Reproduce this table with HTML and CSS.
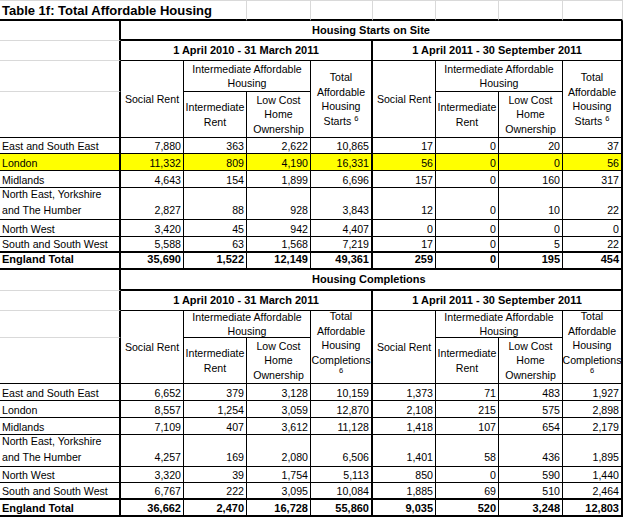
FILE: index.html
```html
<!DOCTYPE html>
<html lang="en">
<head>
<meta charset="utf-8">
<title>Table 1f: Total Affordable Housing</title>
<link rel="stylesheet" href="styles.css">
</head>
<body>
<div class="titlebar">
  <div class="tc title">Table 1f: Total Affordable Housing</div>
  <div class="tc"></div>
  <div class="tc"></div>
  <div class="tc"></div>
  <div class="tc"></div>
  <div class="tc"></div>
  <div class="tc"></div>
</div>

<section class="sheet t1">
  <div class="row band">
    <div class="c lab gl"></div>
    <div class="c fill"></div>
    <div class="c tot band-title">Housing Starts on Site</div>
  </div>
  <div class="row period">
    <div class="c lab gl"></div>
    <div class="c tot span4">1 April 2010 - 31 March 2011</div>
    <div class="c tot span4">1 April 2011 - 30 September 2011</div>
  </div>
  <div class="row">
    <div class="c lab gl"></div>
    <div class="c h r2"><span class="ht">Social Rent</span></div>
    <div class="c h s2"><span class="ht">Intermediate Affordable<br>Housing</span></div>
    <div class="c h r2 tot"><span class="ht">Total<br>Affordable<br>Housing<br>Starts <sup class="fn">6</sup></span></div>
    <div class="c h r2"><span class="ht">Social Rent</span></div>
    <div class="c h s2"><span class="ht">Intermediate Affordable<br>Housing</span></div>
    <div class="c h r2 tot"><span class="ht">Total<br>Affordable<br>Housing<br>Starts <sup class="fn">6</sup></span></div>
  </div>
  <div class="row">
    <div class="c lab"></div>
    <div class="c h"><span class="ht">Intermediate<br>Rent</span></div>
    <div class="c h"><span class="ht">Low Cost<br>Home<br>Ownership</span></div>
    <div class="c h"><span class="ht">Intermediate<br>Rent</span></div>
    <div class="c h"><span class="ht">Low Cost<br>Home<br>Ownership</span></div>
  </div>

  <div class="row d">
    <div class="c">East and South East</div>
    <div class="c">7,880</div><div class="c">363</div><div class="c">2,622</div><div class="c">10,865</div>
    <div class="c">17</div><div class="c">0</div><div class="c">20</div><div class="c">37</div>
  </div>
  <div class="row d hl">
    <div class="c">London</div>
    <div class="c">11,332</div><div class="c">809</div><div class="c">4,190</div><div class="c">16,331</div>
    <div class="c">56</div><div class="c">0</div><div class="c">0</div><div class="c">56</div>
  </div>
  <div class="row d">
    <div class="c">Midlands</div>
    <div class="c">4,643</div><div class="c">154</div><div class="c">1,899</div><div class="c">6,696</div>
    <div class="c">157</div><div class="c">0</div><div class="c">160</div><div class="c">317</div>
  </div>
  <div class="row d tall">
    <div class="c"><span class="ht">North East, Yorkshire<br>and The Humber</span></div>
    <div class="c">2,827</div><div class="c">88</div><div class="c">928</div><div class="c">3,843</div>
    <div class="c">12</div><div class="c">0</div><div class="c">10</div><div class="c">22</div>
  </div>
  <div class="row d">
    <div class="c">North West</div>
    <div class="c">3,420</div><div class="c">45</div><div class="c">942</div><div class="c">4,407</div>
    <div class="c">0</div><div class="c">0</div><div class="c">0</div><div class="c">0</div>
  </div>
  <div class="row d thick">
    <div class="c">South and South West</div>
    <div class="c">5,588</div><div class="c">63</div><div class="c">1,568</div><div class="c">7,219</div>
    <div class="c">17</div><div class="c">0</div><div class="c">5</div><div class="c">22</div>
  </div>
  <div class="row d thick total">
    <div class="c">England Total</div>
    <div class="c">35,690</div><div class="c">1,522</div><div class="c">12,149</div><div class="c">49,361</div>
    <div class="c">259</div><div class="c">0</div><div class="c">195</div><div class="c">454</div>
  </div>
</section>

<section class="sheet t2">
  <div class="row band">
    <div class="c lab gl"></div>
    <div class="c fill"></div>
    <div class="c tot band-title">Housing Completions</div>
  </div>
  <div class="row period">
    <div class="c lab gl"></div>
    <div class="c tot span4">1 April 2010 - 31 March 2011</div>
    <div class="c tot span4">1 April 2011 - 30 September 2011</div>
  </div>
  <div class="row">
    <div class="c lab gl"></div>
    <div class="c h r2"><span class="ht">Social Rent</span></div>
    <div class="c h s2"><span class="ht">Intermediate Affordable<br>Housing</span></div>
    <div class="c h r2 tot top"><span class="ht">Total<br>Affordable<br>Housing<br>Completions<span class="fn-line">6</span></span></div>
    <div class="c h r2"><span class="ht">Social Rent</span></div>
    <div class="c h s2"><span class="ht">Intermediate Affordable<br>Housing</span></div>
    <div class="c h r2 tot top"><span class="ht">Total<br>Affordable<br>Housing<br>Completions<span class="fn-line">6</span></span></div>
  </div>
  <div class="row">
    <div class="c lab"></div>
    <div class="c h"><span class="ht">Intermediate<br>Rent</span></div>
    <div class="c h"><span class="ht">Low Cost<br>Home<br>Ownership</span></div>
    <div class="c h"><span class="ht">Intermediate<br>Rent</span></div>
    <div class="c h"><span class="ht">Low Cost<br>Home<br>Ownership</span></div>
  </div>

  <div class="row d">
    <div class="c">East and South East</div>
    <div class="c">6,652</div><div class="c">379</div><div class="c">3,128</div><div class="c">10,159</div>
    <div class="c">1,373</div><div class="c">71</div><div class="c">483</div><div class="c">1,927</div>
  </div>
  <div class="row d">
    <div class="c">London</div>
    <div class="c">8,557</div><div class="c">1,254</div><div class="c">3,059</div><div class="c">12,870</div>
    <div class="c">2,108</div><div class="c">215</div><div class="c">575</div><div class="c">2,898</div>
  </div>
  <div class="row d">
    <div class="c">Midlands</div>
    <div class="c">7,109</div><div class="c">407</div><div class="c">3,612</div><div class="c">11,128</div>
    <div class="c">1,418</div><div class="c">107</div><div class="c">654</div><div class="c">2,179</div>
  </div>
  <div class="row d tall">
    <div class="c"><span class="ht">North East, Yorkshire<br>and The Humber</span></div>
    <div class="c">4,257</div><div class="c">169</div><div class="c">2,080</div><div class="c">6,506</div>
    <div class="c">1,401</div><div class="c">58</div><div class="c">436</div><div class="c">1,895</div>
  </div>
  <div class="row d">
    <div class="c">North West</div>
    <div class="c">3,320</div><div class="c">39</div><div class="c">1,754</div><div class="c">5,113</div>
    <div class="c">850</div><div class="c">0</div><div class="c">590</div><div class="c">1,440</div>
  </div>
  <div class="row d thick">
    <div class="c">South and South West</div>
    <div class="c">6,767</div><div class="c">222</div><div class="c">3,095</div><div class="c">10,084</div>
    <div class="c">1,885</div><div class="c">69</div><div class="c">510</div><div class="c">2,464</div>
  </div>
  <div class="row d thick total">
    <div class="c">England Total</div>
    <div class="c">36,662</div><div class="c">2,470</div><div class="c">16,728</div><div class="c">55,860</div>
    <div class="c">9,035</div><div class="c">520</div><div class="c">3,248</div><div class="c">12,803</div>
  </div>
</section>
</body>
</html>
```

FILE: styles.css
```css
* {
  box-sizing: border-box;
}

html,
body {
  margin: 0;
  padding: 0;
  background: #ffffff;
}

body {
  width: 626px;
  height: 517px;
  overflow: hidden;
  font-family: "Liberation Sans", Arial, sans-serif;
  font-size: 10.6px;
  color: #000000;
}

.titlebar,
.sheet {
  display: grid;
  grid-template-columns: 121px 63px 63px 64px 62px 63px 63px 64px 60px;
  width: 623px;
}

/* title row with spreadsheet grid lines */
.titlebar {
  height: 21px;
}

.tc {
  border-top: 1px solid #d9d9d9;
  border-right: 1px solid #d9d9d9;
  border-bottom: 2px solid #000000;
}

.title {
  grid-column: span 3;
  display: flex;
  align-items: flex-end;
  padding: 0 0 1px 2px;
  font-size: 13px;
  font-weight: bold;
  line-height: 15px;
  white-space: nowrap;
}

.t1 {
  grid-template-rows: 20px 20px 31px 46px 16px 17px 17px 32px 17px 16px 17px;
}

.t2 {
  grid-template-rows: 21px 20px 27px 46px 17px 17px 17px 32px 16px 17px 17px;
}

.row {
  display: contents;
}

/* base cell */
.c {
  display: flex;
  align-items: flex-end;
  justify-content: flex-end;
  padding: 0 2px 1px;
  border-right: 1px solid #000000;
  border-bottom: 1px solid #000000;
  line-height: 12px;
  white-space: nowrap;
  min-width: 0;
}

.lab,
.d > .c:first-child {
  border-right-width: 2px;
  justify-content: flex-start;
}

.tot,
.d > .c:nth-child(5),
.d > .c:nth-child(9) {
  border-right-width: 2px;
}

.gl {
  border-bottom-color: #d9d9d9;
}

.ht {
  display: block;
}

/* band row: Housing Starts / Completions */
.band > .c {
  align-items: center;
  border-bottom-width: 2px;
  font-size: 11px;
  font-weight: bold;
  line-height: 13px;
  padding-bottom: 0;
}

.band > .lab {
  border-bottom: 1px solid #d9d9d9;
}

.fill {
  grid-column: span 3;
  border-right: 0;
}

.band-title {
  grid-column: span 5;
  justify-content: flex-start;
  padding-left: 1px;
}

/* period row */
.period > .c {
  align-items: center;
  justify-content: center;
  font-size: 11px;
  font-weight: bold;
  line-height: 13px;
  padding-bottom: 0;
}

.span4 {
  grid-column: span 4;
}

/* column headings */
.h {
  align-items: center;
  justify-content: center;
  text-align: center;
  line-height: 14.5px;
  padding: 0 1px;
}

.h.top {
  align-items: flex-start;
}

.h.top .ht {
  margin-top: -2px;
}

.r2 {
  grid-row: span 2;
}

.s2 {
  grid-column: span 2;
}

.fn {
  font-size: 7.5px;
  line-height: 0;
  vertical-align: 4px;
}

.fn-line {
  display: block;
  font-size: 7.5px;
  line-height: 8px;
}

/* data rows */
.hl > .c {
  background: #ffff00;
}

.tall > .c {
  line-height: 16px;
}

.thick > .c {
  border-bottom-width: 2px;
}

.total > .c {
  align-items: center;
  padding-bottom: 0;
  font-size: 11px;
  font-weight: bold;
}

.t1 .total > .c {
  padding-bottom: 3px;
}
```
